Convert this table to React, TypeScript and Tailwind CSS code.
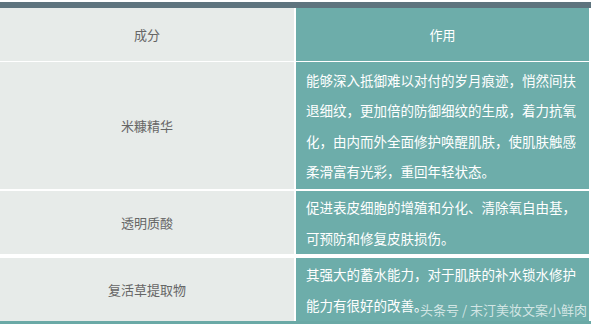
// Ingredient / effect table

const rows = [
    {
        name: '米糠精华',
        lines: [
            '能够深入抵御难以对付的岁月痕迹，悄然间扶',
            '退细纹，更加倍的防御细纹的生成，着力抗氧',
            '化，由内而外全面修护唤醒肌肤，使肌肤触感',
            '柔滑富有光彩，重回年轻状态。',
        ],
        height: 'h-[127px]',
        gap: 'h-[2px]',
    },
    {
        name: '透明质酸',
        lines: ['促进表皮细胞的增殖和分化、清除氧自由基，', '可预防和修复皮肤损伤。'],
        height: 'h-[63px]',
        gap: 'h-[4px]',
    },
    {
        name: '复活草提取物',
        lines: ['其强大的蓄水能力，对于肌肤的补水锁水修护', '能力有很好的改善。'],
        height: 'h-[63px]',
        gap: 'h-0',
    },
];

export default function App() {
    return (
        <div
            className="relative w-[591px] h-[325px] bg-white overflow-hidden"
            style={{ fontFamily: '"Noto Sans CJK SC", "Noto Sans", sans-serif' }}
        >
            <div className="h-[2px]" />
            <div className="h-[6px] bg-[#5e747e]" />

            {/* header */}
            <div className="flex h-[53px]">
                <div className="w-[294px] bg-[#e7ebe9] flex items-center justify-center text-[13px] text-[#666]">
                    成分
                </div>
                <div className="w-[2px]" />
                <div className="w-[293px] bg-[#6dadaa] flex items-center justify-center text-[13px] text-white">
                    作用
                </div>
            </div>
            <div className="h-[1px]" />

            {rows.map((row) => (
                <div key={row.name}>
                    <div className={`flex ${row.height}`}>
                        <div className="w-[294px] bg-[#e7ebe9] flex items-center justify-center text-[13px] text-[#666]">
                            {row.name}
                        </div>
                        <div className="w-[2px]" />
                        <div className="w-[293px] bg-[#6dadaa] flex flex-col justify-center pl-[10px] text-[13.5px] leading-[30.5px] text-white whitespace-nowrap">
                            {row.lines.map((line) => (
                                <div key={line}>{line}</div>
                            ))}
                        </div>
                    </div>
                    <div className={row.gap} />
                </div>
            ))}

            <div className="h-[3px] bg-[#6aa9a6]" />

            {/* watermark */}
            <div className="absolute right-[4px] top-[300px] text-[13px] text-white/70 whitespace-nowrap">
                头条号 / 末汀美妆文案小鲜肉
            </div>
        </div>
    );
}
